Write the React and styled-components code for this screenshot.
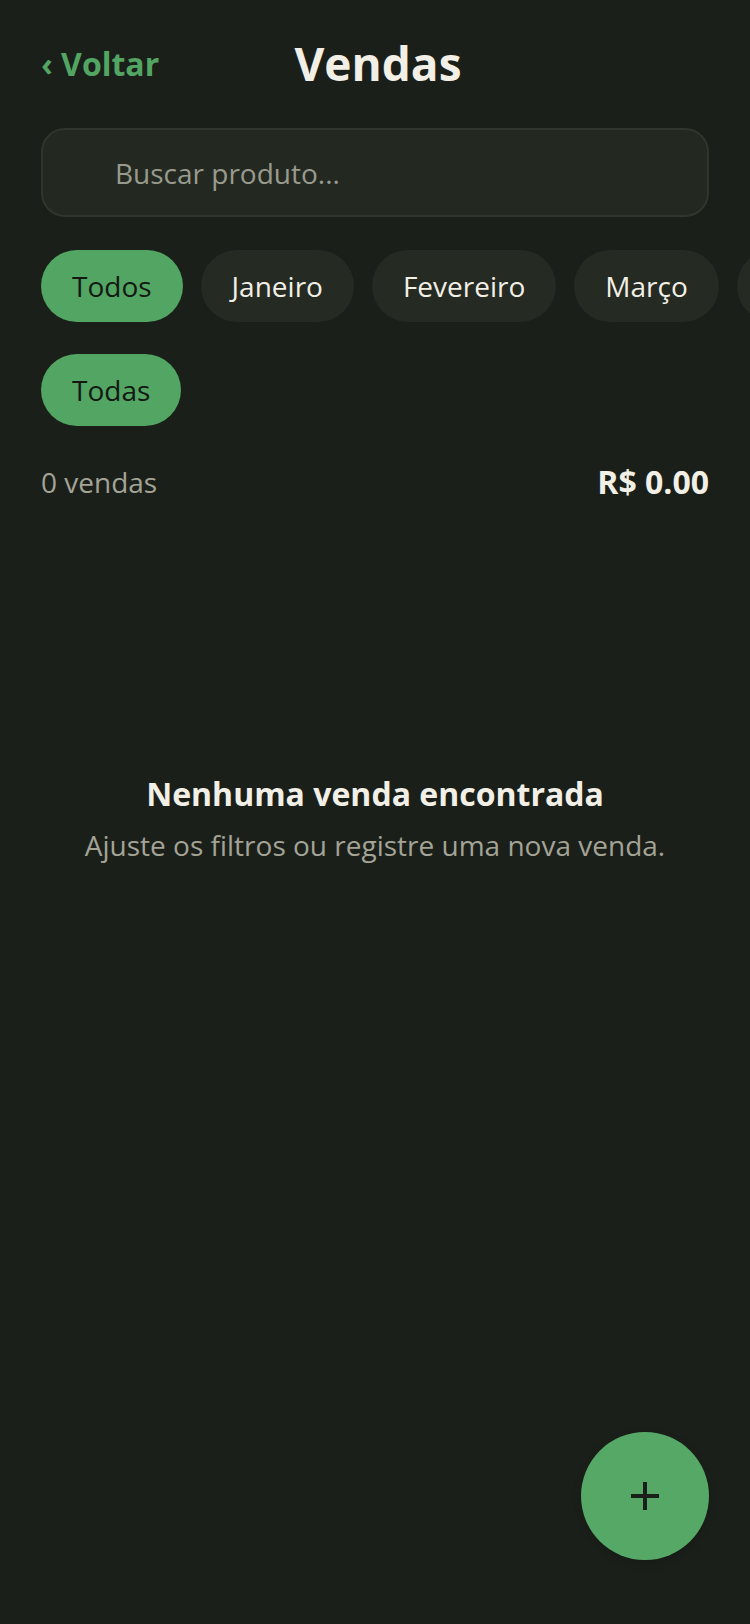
import React from 'react';
import styled, { createGlobalStyle } from 'styled-components';

const months = ['Todos', 'Janeiro', 'Fevereiro', 'Março', 'Abril', 'Maio', 'Junho'];

function App() {
  return (
    <>
      <GlobalStyle />
      <Page>
        <Header>
          <BackLink>‹ Voltar</BackLink>
          <Title>Vendas</Title>
          <span />
        </Header>

        <SearchBox placeholder="Buscar produto..." />

        <ChipRow>
          {months.map((m, i) => (
            <Chip key={m} active={i === 0}>{m}</Chip>
          ))}
        </ChipRow>

        <ChipRow>
          <Chip active>Todas</Chip>
        </ChipRow>

        <Summary>
          <Count>0 vendas</Count>
          <Total>R$ 0.00</Total>
        </Summary>

        <Empty>
          <EmptyTitle>Nenhuma venda encontrada</EmptyTitle>
          <EmptyText>Ajuste os filtros ou registre uma nova venda.</EmptyText>
        </Empty>

        <Fab aria-label="Nova venda">
          <svg width="30" height="30" viewBox="0 0 30 30">
            <path d="M15 1v28M1 15h28" stroke="#1b1f1a" strokeWidth="4" />
          </svg>
        </Fab>
      </Page>
    </>
  );
}

export default App;

const GlobalStyle = createGlobalStyle`
  html, body {
    margin: 0;
    background: #1b1f1a;
  }
  * {
    box-sizing: border-box;
  }
`;

const Page = styled.div`
  position: relative;
  width: 750px;
  min-height: 1624px;
  padding: 21px 41px 0;
  background: #1b1f1a;
  font-family: "Open Sans", "Noto Sans", sans-serif;
  color: #f2efe6;
  overflow: hidden;
`;

const Header = styled.div`
  display: grid;
  grid-template-columns: 1fr auto 1fr;
  align-items: center;
  height: 84px;
`;

const BackLink = styled.a`
  font-size: 32px;
  font-weight: 700;
  color: #52a562;
  cursor: pointer;
`;

const Title = styled.h1`
  margin: 0 0 0 6px;
  font-size: 46px;
  font-weight: 700;
  color: #f2efe6;
`;

const SearchBox = styled.input`
  display: block;
  width: 100%;
  height: 89px;
  margin-top: 23px;
  padding: 0 0 0 72px;
  border: 2px solid #30362c;
  border-radius: 24px;
  background: #232921;
  font-family: inherit;
  font-size: 28px;
  color: #f2efe6;
  outline: none;

  &::placeholder {
    color: #999a8e;
  }
`;

const ChipRow = styled.div`
  display: flex;
  gap: 18px;
  margin-top: 33px;
  margin-right: -41px;
  overflow: hidden;

  & + & {
    margin-top: 32px;
  }
`;

const Chip = styled.button`
  flex: none;
  height: 72px;
  padding: 0 31px;
  border: none;
  border-radius: 36px;
  background: ${p => (p.active ? '#52a562' : '#252a22')};
  color: ${p => (p.active ? '#141812' : '#f2efe6')};
  font-family: inherit;
  font-size: 28px;
`;

const Summary = styled.div`
  display: flex;
  justify-content: space-between;
  align-items: center;
  margin-top: 34px;
`;

const Count = styled.span`
  font-size: 28px;
  color: #a3a396;
`;

const Total = styled.span`
  font-size: 32px;
  font-weight: 700;
  color: #f2efe6;
`;

const Empty = styled.div`
  display: flex;
  flex-direction: column;
  align-items: center;
  margin-top: 269px;
  text-align: center;
`;

const EmptyTitle = styled.h2`
  margin: 0;
  font-size: 32px;
  font-weight: 700;
  color: #f2efe6;
`;

const EmptyText = styled.p`
  margin: 11px 0 0;
  font-size: 28px;
  color: #a3a396;
`;

const Fab = styled.button`
  position: absolute;
  right: 41px;
  bottom: 64px;
  display: flex;
  align-items: center;
  justify-content: center;
  width: 128px;
  height: 128px;
  border: none;
  border-radius: 50%;
  background: #55a866;
  box-shadow: 0 3px 8px rgba(0, 0, 0, 0.15);
`;
